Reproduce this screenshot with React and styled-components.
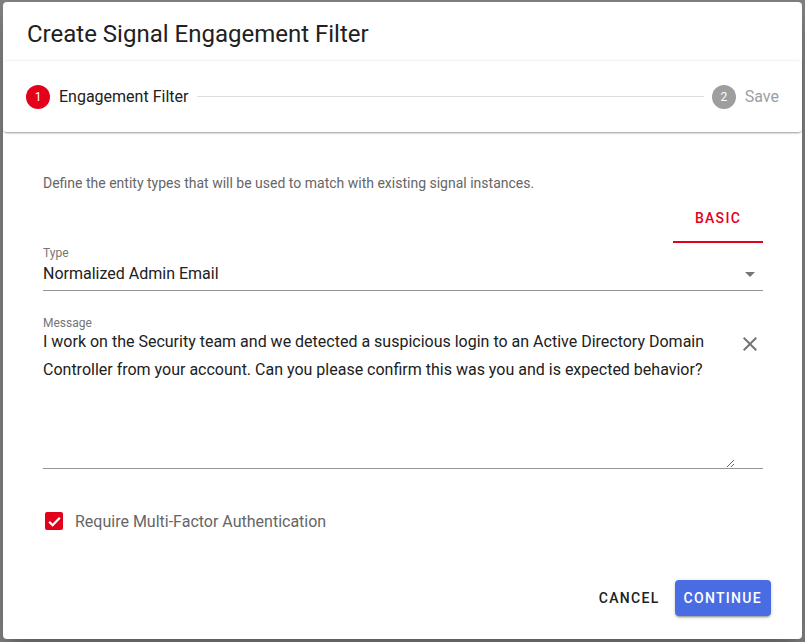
import React from "react";
import styled, { createGlobalStyle } from "styled-components";

const Global = createGlobalStyle`
  html, body { margin: 0; padding: 0; }
  body { font-family: Roboto, "Liberation Sans", Arial, sans-serif; background: #808080; }
  * { box-sizing: border-box; }
`;

const Backdrop = styled.div`
  width: 805px;
  height: 642px;
  background: #808080;
  padding: 2px 3px 3px 3px;
  display: flex;
  overflow: hidden;
`;

const Dialog = styled.div`
  width: 799px;
  height: 637px;
  background: #fff;
  border-radius: 4px;
  box-shadow: 0 11px 15px -7px rgba(0,0,0,0.2), 0 24px 38px 3px rgba(0,0,0,0.14);
  display: flex;
  flex-direction: column;
`;

const Title = styled.h2`
  margin: 0;
  padding: 18px 24px 12px;
  font-size: 24px;
  line-height: 28px;
  font-weight: 400;
  color: #212121;
`;

const Stepper = styled.div`
  height: 72px;
  display: flex;
  align-items: center;
  padding: 0 23px;
  border-radius: 4px;
  border-top: 1px solid #f3f3f3;
  box-shadow: 0 2px 2px -1px rgba(0,0,0,0.35), 0 1px 3px rgba(0,0,0,0.08);
`;

const Step = styled.div`
  display: flex;
  align-items: center;
  gap: 9px;
`;

const StepCircle = styled.span`
  width: 24px;
  height: 24px;
  border-radius: 50%;
  background: ${p => (p.$active ? "#e3001b" : "#9e9e9e")};
  color: #fff;
  font-size: 12px;
  display: flex;
  align-items: center;
  justify-content: center;
`;

const StepLabel = styled.span`
  font-size: 16px;
  color: ${p => (p.$active ? "#212121" : "#9e9e9e")};
`;

const Connector = styled.div`
  flex: 1;
  height: 1px;
  background: #dedede;
  margin: 0 8px 0 9px;
`;

const Body = styled.div`
  padding: 41px 39px 0 40px;
  display: flex;
  flex-direction: column;
`;

const Description = styled.p`
  margin: 0;
  font-size: 14px;
  line-height: 20px;
  color: #666;
`;

const Tabs = styled.div`
  display: flex;
  justify-content: flex-end;
  margin-top: 2px;
`;

const Tab = styled.div`
  width: 90px;
  height: 48px;
  display: flex;
  align-items: center;
  justify-content: center;
  font-size: 14px;
  font-weight: 500;
  letter-spacing: 1.3px;
  color: #e3001b;
  border-bottom: 2px solid #e3001b;
`;

const FieldLabel = styled.label`
  display: block;
  font-size: 12px;
  line-height: 16px;
  color: #757575;
  margin-top: ${p => p.$mt || 0}px;
`;

const SelectRow = styled.div`
  display: flex;
  align-items: flex-start;
  justify-content: space-between;
  height: 30px;
  padding-top: 1px;
  border-bottom: 1px solid #949494;
  font-size: 16px;
  line-height: 24px;
  color: #212121;
`;

const IconSvg = styled.svg`
  width: 24px;
  height: 24px;
  fill: #757575;
  flex: none;
`;

const MessageRow = styled.div`
  display: flex;
  align-items: flex-start;
  border-bottom: 1px solid #949494;
  margin-top: -3px;
`;

const TextArea = styled.textarea`
  flex: 1;
  height: 140px;
  border: none;
  outline: none;
  padding: 0;
  margin: 0;
  resize: vertical;
  font-family: Roboto, "Liberation Sans", Arial, sans-serif;
  font-size: 16px;
  line-height: 28px;
  color: #212121;
  background: transparent;
  display: block;
`;

const CloseButton = styled.button`
  border: none;
  background: none;
  padding: 0;
  margin: 4px 1px 0 3px;
  width: 24px;
  height: 24px;
  display: flex;
`;

const CheckRow = styled.label`
  display: flex;
  align-items: center;
  gap: 12px;
  margin-top: 40px;
  padding-left: 2px;
  height: 24px;
`;

const CheckBox = styled.span`
  width: 18px;
  height: 18px;
  border-radius: 2px;
  background: #e3001b;
  display: flex;
  align-items: center;
  justify-content: center;
`;

const CheckText = styled.span`
  font-size: 16px;
  color: #666;
`;

const Footer = styled.div`
  margin-top: auto;
  display: flex;
  justify-content: flex-end;
  align-items: center;
  padding: 0 31px 23px 0;
  gap: 7px;
`;

const Button = styled.button`
  height: 36px;
  padding: 0 ${p => (p.$primary ? 9 : 8)}px;
  border: none;
  border-radius: 4px;
  font-family: Roboto, "Liberation Sans", Arial, sans-serif;
  font-size: 14px;
  font-weight: 500;
  letter-spacing: 1.3px;
  background: ${p => (p.$primary ? "#4a6ce3" : "transparent")};
  color: ${p => (p.$primary ? "#fff" : "#212121")};
  box-shadow: ${p => (p.$primary ? "0 3px 1px -2px rgba(0,0,0,0.2), 0 2px 2px rgba(0,0,0,0.14), 0 1px 5px rgba(0,0,0,0.12)" : "none")};
`;

const message =
  "I work on the Security team and we detected a suspicious login to an Active Directory Domain Controller from your account. Can you please confirm this was you and is expected behavior?";

export default function App() {
  return (
    <>
      <Global />
      <Backdrop>
        <Dialog>
          <Title>Create Signal Engagement Filter</Title>
          <Stepper>
            <Step>
              <StepCircle $active>1</StepCircle>
              <StepLabel $active>Engagement Filter</StepLabel>
            </Step>
            <Connector />
            <Step>
              <StepCircle>2</StepCircle>
              <StepLabel>Save</StepLabel>
            </Step>
          </Stepper>
          <Body>
            <Description>
              Define the entity types that will be used to match with existing signal instances.
            </Description>
            <Tabs>
              <Tab>BASIC</Tab>
            </Tabs>
            <FieldLabel $mt={2}>Type</FieldLabel>
            <SelectRow>
              <span>Normalized Admin Email</span>
              <IconSvg viewBox="0 0 24 24" style={{ marginRight: 1 }}>
                <path d="M7 10l5 5 5-5z" />
              </IconSvg>
            </SelectRow>
            <FieldLabel $mt={24}>Message</FieldLabel>
            <MessageRow>
              <TextArea defaultValue={message} />
              <CloseButton aria-label="clear">
                <IconSvg viewBox="0 0 24 24">
                  <path d="M19 6.41L17.59 5 12 10.59 6.41 5 5 6.41 10.59 12 5 17.59 6.41 19 12 13.41 17.59 19 19 17.59 13.41 12z" />
                </IconSvg>
              </CloseButton>
            </MessageRow>
            <CheckRow>
              <CheckBox>
                <svg width="15" height="15" viewBox="0 0 24 24">
                  <path d="M3.5 12.5l5.5 5.5L20.5 6" fill="none" stroke="#fff" strokeWidth="3.6" />
                </svg>
              </CheckBox>
              <CheckText>Require Multi-Factor Authentication</CheckText>
            </CheckRow>
          </Body>
          <Footer>
            <Button>CANCEL</Button>
            <Button $primary>CONTINUE</Button>
          </Footer>
        </Dialog>
      </Backdrop>
    </>
  );
}
